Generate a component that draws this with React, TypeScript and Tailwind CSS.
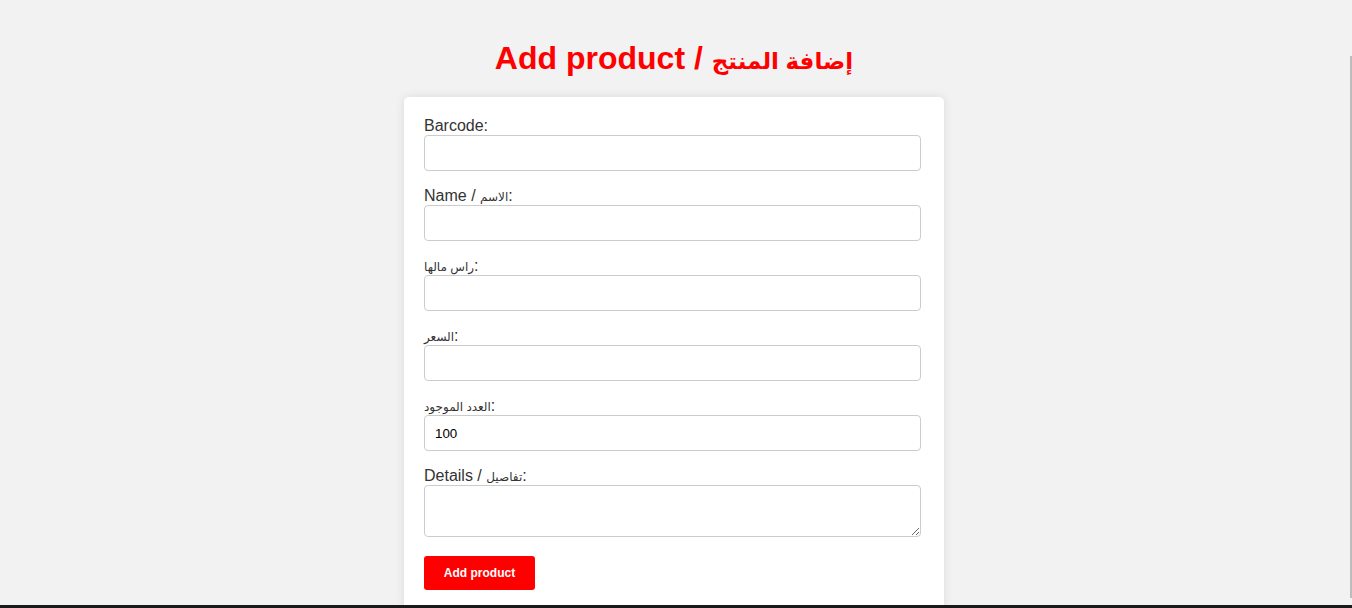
const fields = [
  { en: "Barcode", ar: "", value: "" },
  { en: "Name / ", ar: "الاسم", value: "" },
  { en: "", ar: "راس مالها", value: "" },
  { en: "", ar: "السعر", value: "" },
  { en: "", ar: "العدد الموجود", value: "100" },
];

// Arabic falls back to DejaVu Sans here, which runs wider than the original, so shrink it a bit
const Ar = ({ children }: { children: string }) => (
  <span className="text-[0.75em]">{children}</span>
);

const App = () => {
  return (
    <div className="relative h-[608px] overflow-hidden bg-[#f2f2f2] pr-[4px] font-['Liberation_Sans',Arial,'DejaVu_Sans',sans-serif]">
      {/* Title */}
      <h1 className="mt-[40px] mb-[20px] h-[37px] text-center text-[32px] font-bold leading-[37px] text-[#ff0000]">
        Add product / <span className="text-[23px]">إضافة المنتج</span>
      </h1>

      {/* Form card */}
      <form
        onSubmit={(e) => e.preventDefault()}
        className="mx-auto flex w-[540px] flex-col rounded-[5px] bg-white p-5 shadow-[0_0_10px_rgba(0,0,0,0.1)]"
      >
        {fields.map((field) => (
          <div key={field.en + field.ar} className="mb-4 flex flex-col">
            <label className="h-[18px] text-[16px] leading-[18px] text-[#333]">
              {field.en}
              {field.ar && <Ar>{field.ar}</Ar>}:
            </label>
            <input
              type="text"
              defaultValue={field.value}
              className="h-[36px] w-[497px] rounded-[4px] border border-[#ccc] bg-white px-[10px] text-[13.33px] text-black outline-none"
            />
          </div>
        ))}

        <div className="flex flex-col">
          <label className="h-[18px] text-[16px] leading-[18px] text-[#333]">
            Details / <Ar>تفاصيل</Ar>:
          </label>
          <textarea className="h-[52px] w-[497px] rounded-[4px] border border-[#ccc] bg-white px-[10px] py-[8px] text-[13.33px] outline-none" />
        </div>

        <button
          type="submit"
          className="mt-[19px] h-[34px] w-[111px] rounded-[3px] bg-[#ff0000] text-[12px] font-bold text-white"
        >
          Add product
        </button>
      </form>

      {/* Window chrome overlays */}
      <div className="absolute right-0 top-[56px] h-[542px] w-[2px] bg-[#bcbcbc]" />
      <div className="absolute bottom-0 left-0 right-0 h-[3px] bg-[#1c1a19]" />
    </div>
  );
};

export default App;
